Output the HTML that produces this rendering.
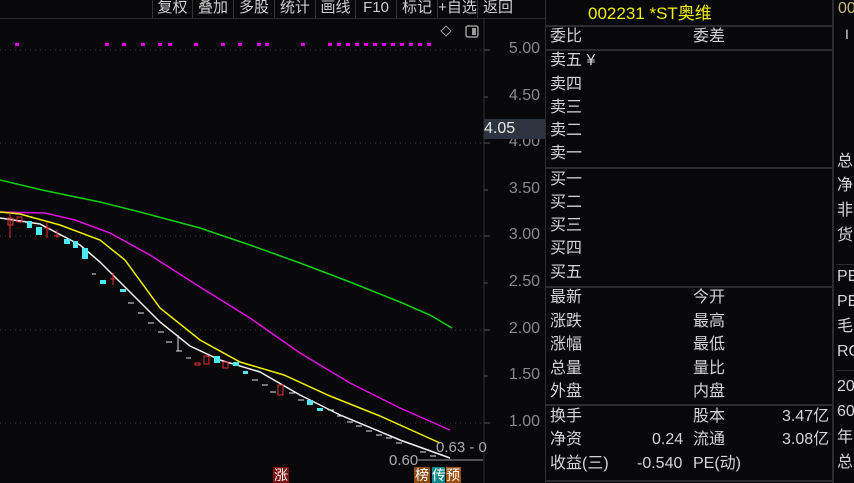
<!DOCTYPE html>
<html><head><meta charset="utf-8"><style>
body{margin:0;width:854px;height:483px;background:#08080b;overflow:hidden;font-family:"Liberation Sans","Noto Sans CJK SC",sans-serif;position:relative;color:#d2d2d2}
.a{position:absolute;white-space:nowrap}
.tb{position:absolute;top:0;height:18px;font-size:15px;line-height:16px;color:#cfcfcf;text-align:center;border-left:1px solid #333}
.r{position:absolute;font-size:16px;line-height:20px;color:#d4d4d4;white-space:nowrap}
.ax{position:absolute;font-size:16px;color:#8a8a8a;right:314px}
.hl{position:absolute;left:545px;width:288px;height:2px;background:#2c2c30}
</style></head><body>
<!-- toolbar -->
<div class="tb" style="left:152px;width:39px">复权</div>
<div class="tb" style="left:192px;width:40px">叠加</div>
<div class="tb" style="left:233px;width:40px">多股</div>
<div class="tb" style="left:274px;width:40px">统计</div>
<div class="tb" style="left:315px;width:39px">画线</div>
<div class="tb" style="left:355px;width:40px">F10</div>
<div class="tb" style="left:396px;width:40px">标记</div>
<div class="tb" style="left:437px;width:39px">+自选</div>
<div class="tb" style="left:477px;width:40px">返回</div>
<div class="a" style="left:0;top:18px;width:545px;height:1px;background:#2a2a2e"></div>
<svg class="a" style="left:0;top:0" width="545" height="483">
<g stroke="#3a3a40" stroke-dasharray="1,4">
<line x1="0" y1="50" x2="482" y2="50"/><line x1="0" y1="143" x2="482" y2="143"/><line x1="0" y1="236" x2="482" y2="236"/><line x1="0" y1="330" x2="482" y2="330"/><line x1="0" y1="423" x2="482" y2="423"/>
</g>
<line x1="484" y1="19" x2="484" y2="483" stroke="#2e2e34"/>
<g stroke="#555"><line x1="484" y1="50" x2="490" y2="50"/><line x1="484" y1="97" x2="488" y2="97"/><line x1="484" y1="143" x2="490" y2="143"/><line x1="484" y1="190" x2="488" y2="190"/><line x1="484" y1="236" x2="490" y2="236"/><line x1="484" y1="283" x2="488" y2="283"/><line x1="484" y1="330" x2="490" y2="330"/><line x1="484" y1="376" x2="488" y2="376"/><line x1="484" y1="423" x2="490" y2="423"/></g>
<path d="M446 26l5 5-5 5-5-5z" fill="none" stroke="#999"/>
<rect x="466" y="26" width="12" height="11" rx="2" fill="none" stroke="#999" stroke-width="1.5"/><rect x="472" y="28" width="4" height="7" fill="#999"/>
<g fill="#e000e0">
<rect x="15" y="43" width="4" height="3"/><rect x="105" y="43" width="4" height="3"/><rect x="122" y="43" width="4" height="3"/><rect x="141" y="43" width="4" height="3"/><rect x="158" y="43" width="4" height="3"/><rect x="168" y="43" width="4" height="3"/><rect x="194" y="43" width="4" height="3"/><rect x="221" y="43" width="4" height="3"/><rect x="238" y="43" width="4" height="3"/><rect x="257" y="43" width="4" height="3"/><rect x="265" y="43" width="4" height="3"/><rect x="301" y="43" width="4" height="3"/><rect x="328" y="43" width="4" height="3"/><rect x="337" y="43" width="4" height="3"/><rect x="346" y="43" width="4" height="3"/><rect x="355" y="43" width="4" height="3"/><rect x="364" y="43" width="4" height="3"/><rect x="373" y="43" width="4" height="3"/><rect x="382" y="43" width="4" height="3"/><rect x="391" y="43" width="4" height="3"/><rect x="400" y="43" width="4" height="3"/><rect x="409" y="43" width="4" height="3"/><rect x="418" y="43" width="4" height="3"/><rect x="427" y="43" width="4" height="3"/>
</g>
<g fill="none" stroke-width="1.5">
<polyline stroke="#10d010" points="0,180 42,190 100,202 140,212 200,228 250,245 300,263 350,282 400,302 430,315 452,328"/>
<polyline stroke="#e010e0" points="0,212 45,213 75,220 110,233 150,255 200,287 250,318 300,353 350,383 400,408 450,430"/>
<polyline stroke="#f0f000" points="0,212 20,214 60,225 100,240 125,260 160,308 200,340 240,362 284,375 330,396 380,416 440,443"/>
<polyline stroke="#f0f0f0" points="0,218 40,224 80,245 100,262 130,292 160,322 190,346 220,360 260,372 300,395 340,415 400,440 450,458"/>
</g>
<g stroke="#e03030" fill="none"><rect x="8" y="218" width="5" height="7"/><line x1="10" y1="213" x2="10" y2="238"/><rect x="17" y="217" width="5" height="5"/><line x1="44" y1="228" x2="50" y2="228"/><line x1="47" y1="222" x2="47" y2="238"/><line x1="54" y1="236" x2="60" y2="236"/><line x1="57" y1="230" x2="57" y2="238"/><line x1="110" y1="279" x2="116" y2="279"/><line x1="113" y1="273" x2="113" y2="285"/><rect x="195" y="363" width="5" height="2"/><rect x="204" y="356" width="5" height="8"/><rect x="223" y="362" width="5" height="6"/><rect x="278" y="385" width="5" height="10"/></g>
<g fill="#50e8f0"><rect x="27" y="221" width="5" height="7"/><rect x="36" y="227" width="6" height="8"/><rect x="64" y="239" width="6" height="5"/><rect x="73" y="241" width="5" height="7"/><rect x="82" y="248" width="6" height="11"/><rect x="100" y="280" width="6" height="4"/><rect x="120" y="289" width="6" height="3"/><rect x="214" y="356" width="6" height="7"/><rect x="233" y="362" width="6" height="4"/><rect x="243" y="371" width="5" height="3"/><rect x="307" y="400" width="6" height="5"/><rect x="317" y="408" width="6" height="3"/></g>
<g stroke="#e0e0e0"><line x1="92" y1="274" x2="96" y2="274"/><line x1="128" y1="303" x2="134" y2="303"/><line x1="138" y1="313" x2="144" y2="313"/><line x1="148" y1="323" x2="154" y2="323"/><line x1="158" y1="332" x2="164" y2="332"/><line x1="166" y1="342" x2="172" y2="342"/><line x1="176" y1="351" x2="182" y2="351"/><line x1="178" y1="335" x2="178" y2="351"/><line x1="186" y1="358" x2="191" y2="358"/><line x1="252" y1="380" x2="258" y2="380"/><line x1="262" y1="385" x2="268" y2="385"/><line x1="270" y1="392" x2="276" y2="392"/><line x1="289" y1="393" x2="295" y2="393"/><line x1="298" y1="400" x2="304" y2="400"/><line x1="328" y1="410" x2="334" y2="410"/><line x1="337" y1="416" x2="343" y2="416"/><line x1="347" y1="422" x2="353" y2="422"/><line x1="356" y1="426" x2="362" y2="426"/><line x1="366" y1="431" x2="372" y2="431"/><line x1="376" y1="435" x2="382" y2="435"/><line x1="386" y1="438" x2="392" y2="438"/><line x1="396" y1="443" x2="402" y2="443"/><line x1="420" y1="452" x2="426" y2="452"/><line x1="430" y1="456" x2="436" y2="456"/></g>
<line x1="418" y1="460" x2="483" y2="460" stroke="#9a9a9a"/>
</svg>
<div class="a" style="left:436px;top:439px;font-size:15px;color:#aaa">0.63 - 0</div>
<div class="a" style="left:389px;top:452px;font-size:15px;color:#aaa">0.60</div>
<div class="a" style="left:273px;top:467px;width:16px;height:16px;background:#7a1010;color:#fff;font-size:14px;line-height:16px;text-align:center">涨</div>
<div class="a" style="left:414px;top:467px;width:16px;height:16px;background:#8a4a10;color:#fff;font-size:14px;line-height:16px;text-align:center">榜</div>
<div class="a" style="left:432px;top:467px;width:13px;height:16px;background:#108a8a;color:#fff;font-size:14px;line-height:16px">传</div>
<div class="a" style="left:446px;top:467px;width:15px;height:16px;background:#a05010;color:#fff;font-size:14px;line-height:16px">预</div>
<div class="ax" style="top:40px">5.00</div>
<div class="ax" style="top:87px">4.50</div>
<div class="ax" style="top:133px">4.00</div>
<div class="ax" style="top:180px">3.50</div>
<div class="ax" style="top:226px">3.00</div>
<div class="ax" style="top:273px">2.50</div>
<div class="ax" style="top:320px">2.00</div>
<div class="ax" style="top:366px">1.50</div>
<div class="ax" style="top:413px">1.00</div>
<div class="a" style="left:484px;top:119px;width:62px;height:20px;background:#2e3340;color:#e8e8e8;font-size:16px;line-height:20px">4.05</div>
<!-- panel -->
<div class="a" style="left:545px;top:0;width:1px;height:483px;background:#2c2c30"></div>
<div class="a" style="left:832px;top:0;width:2px;height:483px;background:#2c2c30"></div>
<div class="a" style="left:588px;top:-1px;font-size:17px;color:#f0f000">002231 *ST奥维</div>
<div class="hl" style="top:25px"></div>
<div class="hl" style="top:49px"></div>
<div class="hl" style="top:167px"></div>
<div class="hl" style="top:286px"></div>
<div class="hl" style="top:404px"></div>
<div class="hl" style="top:480px"></div>
<div class="r" style="left:550px;top:27px">委比</div><div class="r" style="left:693px;top:27px">委差</div>
<div class="r" style="left:550px;top:51px">卖五 ¥</div>
<div class="r" style="left:550px;top:75px">卖四</div>
<div class="r" style="left:550px;top:98px">卖三</div>
<div class="r" style="left:550px;top:121px">卖二</div>
<div class="r" style="left:550px;top:144px">卖一</div>
<div class="r" style="left:550px;top:170px">买一</div>
<div class="r" style="left:550px;top:193px">买二</div>
<div class="r" style="left:550px;top:216px">买三</div>
<div class="r" style="left:550px;top:239px">买四</div>
<div class="r" style="left:550px;top:263px">买五</div>
<div class="r" style="left:550px;top:288px">最新</div><div class="r" style="left:693px;top:288px">今开</div>
<div class="r" style="left:550px;top:312px">涨跌</div><div class="r" style="left:693px;top:312px">最高</div>
<div class="r" style="left:550px;top:335px">涨幅</div><div class="r" style="left:693px;top:335px">最低</div>
<div class="r" style="left:550px;top:359px">总量</div><div class="r" style="left:693px;top:359px">量比</div>
<div class="r" style="left:550px;top:382px">外盘</div><div class="r" style="left:693px;top:382px">内盘</div>
<div class="r" style="left:550px;top:407px">换手</div><div class="r" style="left:693px;top:407px">股本</div><div class="r" style="left:782px;top:407px">3.47亿</div>
<div class="r" style="left:550px;top:430px">净资</div><div class="r" style="left:652px;top:430px">0.24</div><div class="r" style="left:693px;top:430px">流通</div><div class="r" style="left:782px;top:430px">3.08亿</div>
<div class="r" style="left:550px;top:454px">收益(三)</div><div class="r" style="left:637px;top:454px">-0.540</div><div class="r" style="left:693px;top:454px">PE(动)</div>
<!-- right column -->
<div class="r" style="left:838px;top:-1px;color:#c8b880">00</div>
<div class="r" style="left:845px;top:24px;font-size:14px">I</div>
<div class="r" style="left:837px;top:152px">总</div>
<div class="r" style="left:837px;top:176px">净</div>
<div class="r" style="left:837px;top:201px">非</div>
<div class="r" style="left:837px;top:226px">货</div>
<div class="a" style="left:836px;top:264px;width:18px;height:1px;background:#2c2c30"></div>
<div class="r" style="left:837px;top:267px">PE</div>
<div class="r" style="left:837px;top:292px">PE</div>
<div class="r" style="left:837px;top:317px">毛</div>
<div class="r" style="left:837px;top:342px">RO</div>
<div class="a" style="left:836px;top:370px;width:18px;height:1px;background:#2c2c30"></div>
<div class="r" style="left:837px;top:377px">20</div>
<div class="r" style="left:837px;top:402px">60</div>
<div class="r" style="left:837px;top:428px">年</div>
<div class="r" style="left:837px;top:453px">总</div>
</body></html>
